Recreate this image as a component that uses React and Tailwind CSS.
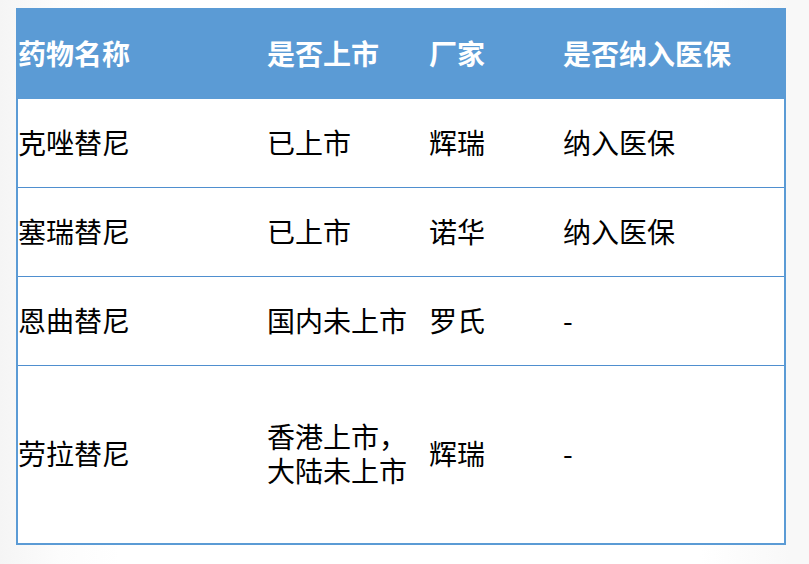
import React from 'react';

const rows = [
  { name: '克唑替尼', status: ['已上市'], maker: '辉瑞', ins: '纳入医保', h: 'h-[85px]' },
  { name: '塞瑞替尼', status: ['已上市'], maker: '诺华', ins: '纳入医保', h: 'h-[85px]' },
  { name: '恩曲替尼', status: ['国内未上市'], maker: '罗氏', ins: '-', h: 'h-[85px]' },
  { name: '劳拉替尼', status: ['香港上市，', '大陆未上市'], maker: '辉瑞', ins: '-', h: 'h-[174px]' },
];

const App = () => {
  return (
    <div
      className="w-[809px] h-[564px] pt-[8px] pl-[16px] bg-[linear-gradient(to_right,#f5f5f5_0px,#fcfcfc_60px,#ffffff_120px,#ffffff_700px,#f8f8f8_790px)] text-black"
      style={{ fontFamily: '"Noto Sans CJK SC", "Noto Sans", sans-serif' }}
    >
      <div className="w-[770px] border-2 border-[#5b9bd5] bg-white">
        {/* header */}
        <div className="grid grid-cols-[249px_162px_134px_221px] h-[89px] pb-[3px] bg-[#5b9bd5] items-center text-white font-bold text-[28px] leading-none">
          <div>药物名称</div>
          <div>是否上市</div>
          <div>厂家</div>
          <div>是否纳入医保</div>
        </div>

        {/* body */}
        {rows.map((r, i) => (
          <div
            key={r.name}
            className={`grid grid-cols-[249px_162px_134px_221px] items-center text-[28px] leading-[34px] pb-[3px] ${r.h} ${
              i < rows.length - 1 ? 'border-b border-[#4f8fcf]' : ''
            } box-content`}
          >
            <div>{r.name}</div>
            <div>
              {r.status.map((s) => (
                <div key={s}>{s}</div>
              ))}
            </div>
            <div>{r.maker}</div>
            <div>{r.ins}</div>
          </div>
        ))}
      </div>
    </div>
  );
};

export default App;
